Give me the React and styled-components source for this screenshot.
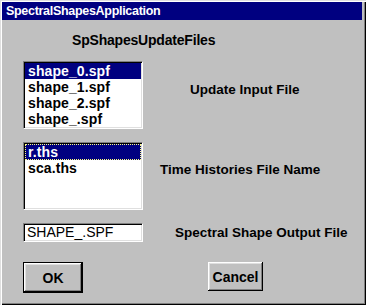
import React from "react";
import styled, { createGlobalStyle } from "styled-components";

const Global = createGlobalStyle`
  html, body { margin: 0; padding: 0; background: #c0c0c0; }
  body { font-family: "Liberation Sans", Arial, sans-serif; }
`;

const Window = styled.div`
  width: 366px;
  height: 305px;
  box-sizing: border-box;
  background: #c0c0c0;
  padding: 2px;
  box-shadow: inset 1px 1px 0 #dfdfdf, inset 2px 2px 0 #fff,
    inset -1px -1px 0 #000, inset -2px -2px 0 #808080;
  display: flex;
  flex-direction: column;
  font-family: "Liberation Sans", Arial, sans-serif;
  color: #000;
`;

const TitleBar = styled.div`
  height: 17px;
  padding-top: 1px;
  margin-right: 2px;
  padding-left: 4px;
  background: #000080;
  color: #fff;
  font-weight: bold;
  font-size: 12.5px;
  line-height: 17px;
  letter-spacing: -0.3px;
`;

const Content = styled.div`
  padding: 12px 0 0 21px;
  display: flex;
  flex-direction: column;
`;

const Heading = styled.div`
  margin-left: 49px;
  font-weight: bold;
  font-size: 14px;
  line-height: 16px;
  letter-spacing: -0.2px;
`;

const Row = styled.div`
  display: flex;
  align-items: flex-start;
  margin-top: ${(p) => p.$gap}px;
`;

const Label = styled.div`
  margin-left: ${(p) => p.$indent}px;
  margin-top: ${(p) => p.$top}px;
  font-weight: bold;
  font-size: 13.5px;
  line-height: 16px;
  white-space: nowrap;
`;

const ListBox = styled.div`
  width: 120px;
  height: 68px;
  box-sizing: border-box;
  background: #fff;
  border: 1px solid;
  border-color: #808080 #fff #fff #808080;
  box-shadow: inset 1px 1px 0 #000, inset -1px -1px 0 #dfdfdf;
  padding: 1px;
  display: flex;
  flex-direction: column;
`;

const Item = styled.div`
  height: 16px;
  line-height: 16px;
  padding-left: 3px;
  font-weight: bold;
  font-size: 14px;
  letter-spacing: 0.1px;
  background: ${(p) => (p.$selected ? "#000080" : "transparent")};
  color: ${(p) => (p.$selected ? "#fff" : "#000")};
  outline: ${(p) => (p.$focus ? "1px dotted #ffff80" : "none")};
  outline-offset: -1px;
`;

const TextBox = styled.div`
  width: 120px;
  height: 19px;
  box-sizing: border-box;
  background: #fff;
  border: 1px solid;
  border-color: #808080 #fff #fff #808080;
  box-shadow: inset 1px 1px 0 #000, inset -1px -1px 0 #dfdfdf;
  padding-left: 3px;
  font-size: 14px;
  line-height: 17px;
`;

const Button = styled.div`
  width: ${(p) => p.$w}px;
  height: ${(p) => p.$h}px;
  margin-left: ${(p) => p.$ml || 0}px;
  box-sizing: border-box;
  background: #c0c0c0;
  border: ${(p) => (p.$default ? "1px solid #000" : "none")};
  box-shadow: inset -1px -1px 0 #000, inset 1px 1px 0 #fff,
    inset -2px -2px 0 #808080, inset 2px 2px 0 #dfdfdf;
  display: flex;
  align-items: center;
  justify-content: center;
  font-weight: bold;
  font-size: 14px;
`;

export default function App() {
  return (
    <>
      <Global />
      <Window>
        <TitleBar>SpectralShapesApplication</TitleBar>
        <Content>
          <Heading>SpShapesUpdateFiles</Heading>
          <Row $gap={13}>
            <ListBox>
              <Item $selected>shape_0.spf</Item>
              <Item>shape_1.spf</Item>
              <Item>shape_2.spf</Item>
              <Item>shape_.spf</Item>
            </ListBox>
            <Label $indent={47} $top={21}>Update Input File</Label>
          </Row>
          <Row $gap={13}>
            <ListBox>
              <Item $selected $focus>r.ths</Item>
              <Item>sca.ths</Item>
            </ListBox>
            <Label $indent={17} $top={20}>Time Histories File Name</Label>
          </Row>
          <Row $gap={13}>
            <TextBox>SHAPE_.SPF</TextBox>
            <Label $indent={32} $top={2}>Spectral Shape Output File</Label>
          </Row>
          <Row $gap={20}>
            <Button $default $w={60} $h={31}>OK</Button>
            <Button $w={55} $h={29} $ml={125}>Cancel</Button>
          </Row>
        </Content>
      </Window>
    </>
  );
}
